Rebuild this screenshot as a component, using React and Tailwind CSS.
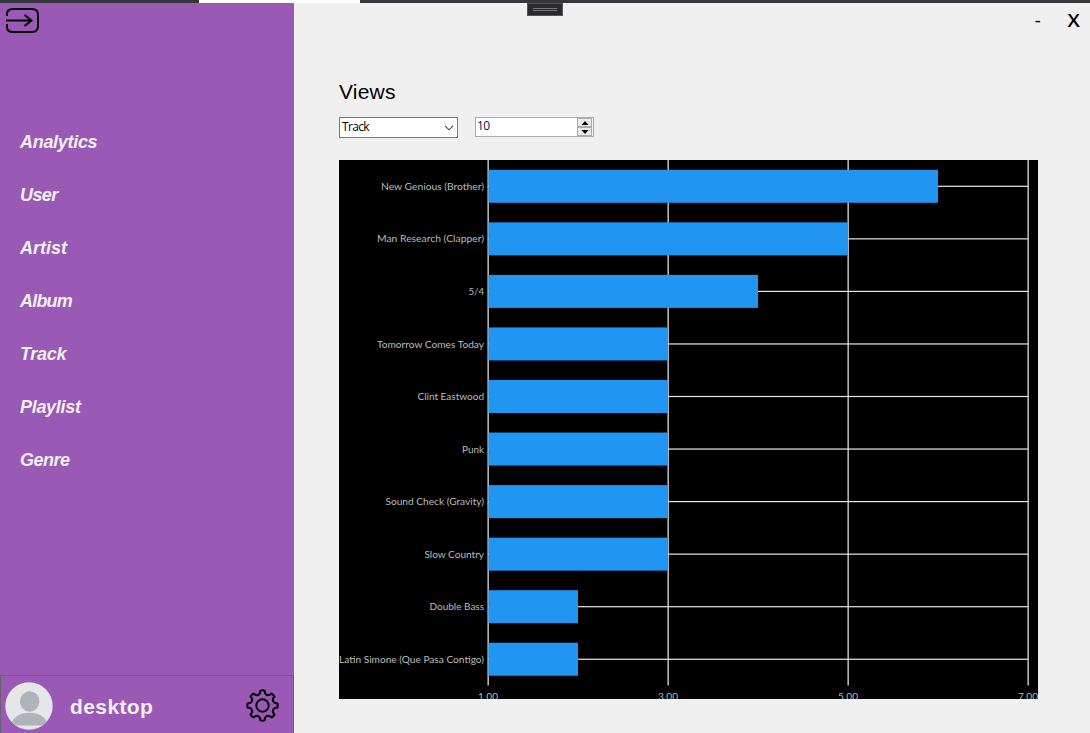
const NAV = [
  { label: "Analytics", tracking: "tracking-[-0.3px]" },
  { label: "User", tracking: "tracking-[-0.6px]" },
  { label: "Artist", tracking: "tracking-[0px]" },
  { label: "Album", tracking: "tracking-[-0.8px]" },
  { label: "Track", tracking: "tracking-[-0.3px]" },
  { label: "Playlist", tracking: "tracking-[-0.3px]" },
  { label: "Genre", tracking: "tracking-[-0.5px]" },
];

const TRACKS = [
  { name: "New Genious (Brother)", views: 6, width: 103 },
  { name: "Man Research (Clapper)", views: 5, width: 107 },
  { name: "5/4", views: 4, width: 15.5 },
  { name: "Tomorrow Comes Today", views: 3, width: 107 },
  { name: "Clint Eastwood", views: 3, width: 66.5 },
  { name: "Punk", views: 3, width: 22 },
  { name: "Sound Check (Gravity)", views: 3, width: 98.5 },
  { name: "Slow Country", views: 3, width: 59.5 },
  { name: "Double Bass", views: 2, width: 54.5 },
  { name: "Latin Simone (Que Pasa Contigo)", views: 2, width: 145 },
];

const TICKS = [1, 3, 5, 7];
const AXIS_X = 149;
const UNIT = 90;
const ROW = 52.55;

function ExitIcon() {
  return (
    <svg width="35" height="27" viewBox="0 0 35 27" fill="none" stroke="#000" strokeWidth="2">
      <path d="M2 9V7Q2 2 8 2H27Q33 2 33 8V19Q33 25 27 25H8Q2 25 2 20V17" />
      <path d="M1 13.5H26M19.5 8L26.5 13.5L19.5 19" />
    </svg>
  );
}

function Avatar() {
  return (
    <svg width="48" height="48" viewBox="0 0 48 48">
      <defs>
        <clipPath id="avatar">
          <circle cx="24" cy="24" r="23.7" />
        </clipPath>
      </defs>
      <circle cx="24" cy="24" r="23.7" fill="#e4e6e8" />
      <g clipPath="url(#avatar)" fill="#aeb4b9">
        <ellipse cx="24.7" cy="19.5" rx="9.7" ry="10.3" />
        <path d="M5 43.5C8 35 15 30.8 24.5 30.8S41 35 44 43.5Z" />
      </g>
    </svg>
  );
}

function polar(deg, r) {
  const a = (deg * Math.PI) / 180;
  return `${(16.5 + r * Math.sin(a)).toFixed(2)} ${(16.5 - r * Math.cos(a)).toFixed(2)}`;
}

function gearPath() {
  let d = "";
  for (let i = 0; i < 8; i++) {
    const c = i * 45;
    d += `${i ? "L" : "M"}${polar(c - 8, 15)}Q${polar(c, 15.5)} ${polar(c + 8, 15)}`;
    d += `L${polar(c + 11, 12.8)}Q${polar(c + 22.5, 10.4)} ${polar(c + 34, 12.8)}`;
  }
  return `${d}Z`;
}

function GearIcon() {
  return (
    <svg width="33" height="33" viewBox="0 0 33 33" fill="none" stroke="#000" strokeWidth="2" strokeLinejoin="round">
      <path d={gearPath()} />
      <circle cx="16.5" cy="16.5" r="6.2" />
    </svg>
  );
}

function Chart() {
  return (
    <svg width="699" height="539" viewBox="0 0 699 539" className="block bg-black font-[Lato,sans-serif]">
      {TICKS.map((t) => (
        <g key={t}>
          <rect x={AXIS_X + (t - 1) * UNIT - 0.5} y="0" width="1.3" height="525.5" fill="#dcdcdc" />
          <text x={AXIS_X + (t - 1) * UNIT} y="540" fontSize="10" fill="#b8b8b8" textAnchor="middle" textLength="20" lengthAdjust="spacingAndGlyphs">
            {t}.00
          </text>
        </g>
      ))}
      {TRACKS.map((t, i) => {
        const y = 26.3 + i * ROW;
        return (
          <g key={t.name}>
            <rect x={AXIS_X} y={y - 0.6} width="540" height="1.2" fill="#e8e8e8" />
            <rect x={AXIS_X + 0.5} y={y - 16.5} width={(t.views - 1) * UNIT - 0.5} height="33" fill="#2195f2" />
            <text x={145 - t.width} y={Math.round(y + 3.6)} fontSize="10" fill="#bcbcbc" textLength={t.width} lengthAdjust="spacingAndGlyphs">
              {t.name}
            </text>
          </g>
        );
      })}
    </svg>
  );
}

export default function App() {
  return (
    <div className="relative flex h-[733px] w-[1090px] flex-col overflow-hidden bg-[#f0f0f0] font-['Liberation_Sans',sans-serif] text-black">
      <div className="flex h-[3px] shrink-0 bg-[#36373d]">
        <div className="ml-[199px] w-[161px] bg-white" />
      </div>
      <div className="absolute left-[527px] top-[3px] flex h-[13px] w-[36px] flex-col justify-center gap-px border border-[#555] bg-[#2b2b2d] px-[5px]">
        <div className="h-px bg-[#777]" />
        <div className="h-px bg-[#777]" />
      </div>
      <div className="flex min-h-0 grow">
        <aside className="flex w-[294px] shrink-0 flex-col bg-[#9b59b6]">
          <button className="ml-[5px] mt-[4px] h-[27px] w-[35px]">
            <ExitIcon />
          </button>
          <nav className="mt-[82px] flex flex-col pl-5">
            {NAV.map((n) => (
              <a key={n.label} className={`h-[53px] text-[18px] font-bold italic leading-[53px] text-[#f0f0f0] ${n.tracking}`}>
                {n.label}
              </a>
            ))}
          </nav>
          <div className="mt-auto flex h-[58px] items-center border border-b-0 border-[#69626e] pl-[4px] pr-[14px] pt-[3px]">
            <Avatar />
            <span className="ml-[17px] pt-[2px] text-[21px] font-bold leading-6 tracking-[0.4px] text-[#f0f0f0]">desktop</span>
            <span className="ml-auto pb-px">
              <GearIcon />
            </span>
          </div>
        </aside>
        <main className="flex grow flex-col pl-[45px]">
          <div className="flex h-[34px] items-center justify-end pr-[11px]">
            <span className="mr-[27px] pt-[2px] text-[18px]">-</span>
            <span className="font-['Open_Sans',sans-serif] text-[18px] font-semibold">
              <span className="inline-block scale-x-110">X</span>
            </span>
          </div>
          <h1 className="mt-[43px] h-6 text-[21px] leading-6 tracking-[0.2px]">Views</h1>
          <div className="mt-[13px] flex gap-[17px] font-['Open_Sans',sans-serif] text-[12px]">
            <div className="flex h-[21px] w-[119px] items-center justify-between border border-[#777] bg-white pl-[2px] pr-[3px]">
              <span className="pb-px tracking-[-0.65px]">Track</span>
              <svg width="10" height="6" viewBox="0 0 10 6" fill="none" stroke="#444" strokeWidth="1.1">
                <path d="M1 0.8L5 4.8L9 0.8" />
              </svg>
            </div>
            <div className="flex h-5 w-[119px] justify-between border border-[#abadb3] bg-white pl-[1px]">
              <span className="leading-[15px] tracking-[-0.7px] text-[#101040]">10</span>
              <div className="flex w-4 flex-col bg-[#f0f0f0] pr-px">
                {["M4 0L7.5 4H0.5Z", "M4 4L7.5 0H0.5Z"].map((d) => (
                  <div key={d} className="flex h-[9px] shrink-0 items-center justify-center border border-[#acacac] bg-[#ececec]">
                    <svg width="8" height="4" viewBox="0 0 8 4">
                      <path d={d} />
                    </svg>
                  </div>
                ))}
              </div>
            </div>
          </div>
          <div className="mt-[22px]">
            <Chart />
          </div>
        </main>
      </div>
    </div>
  );
}
